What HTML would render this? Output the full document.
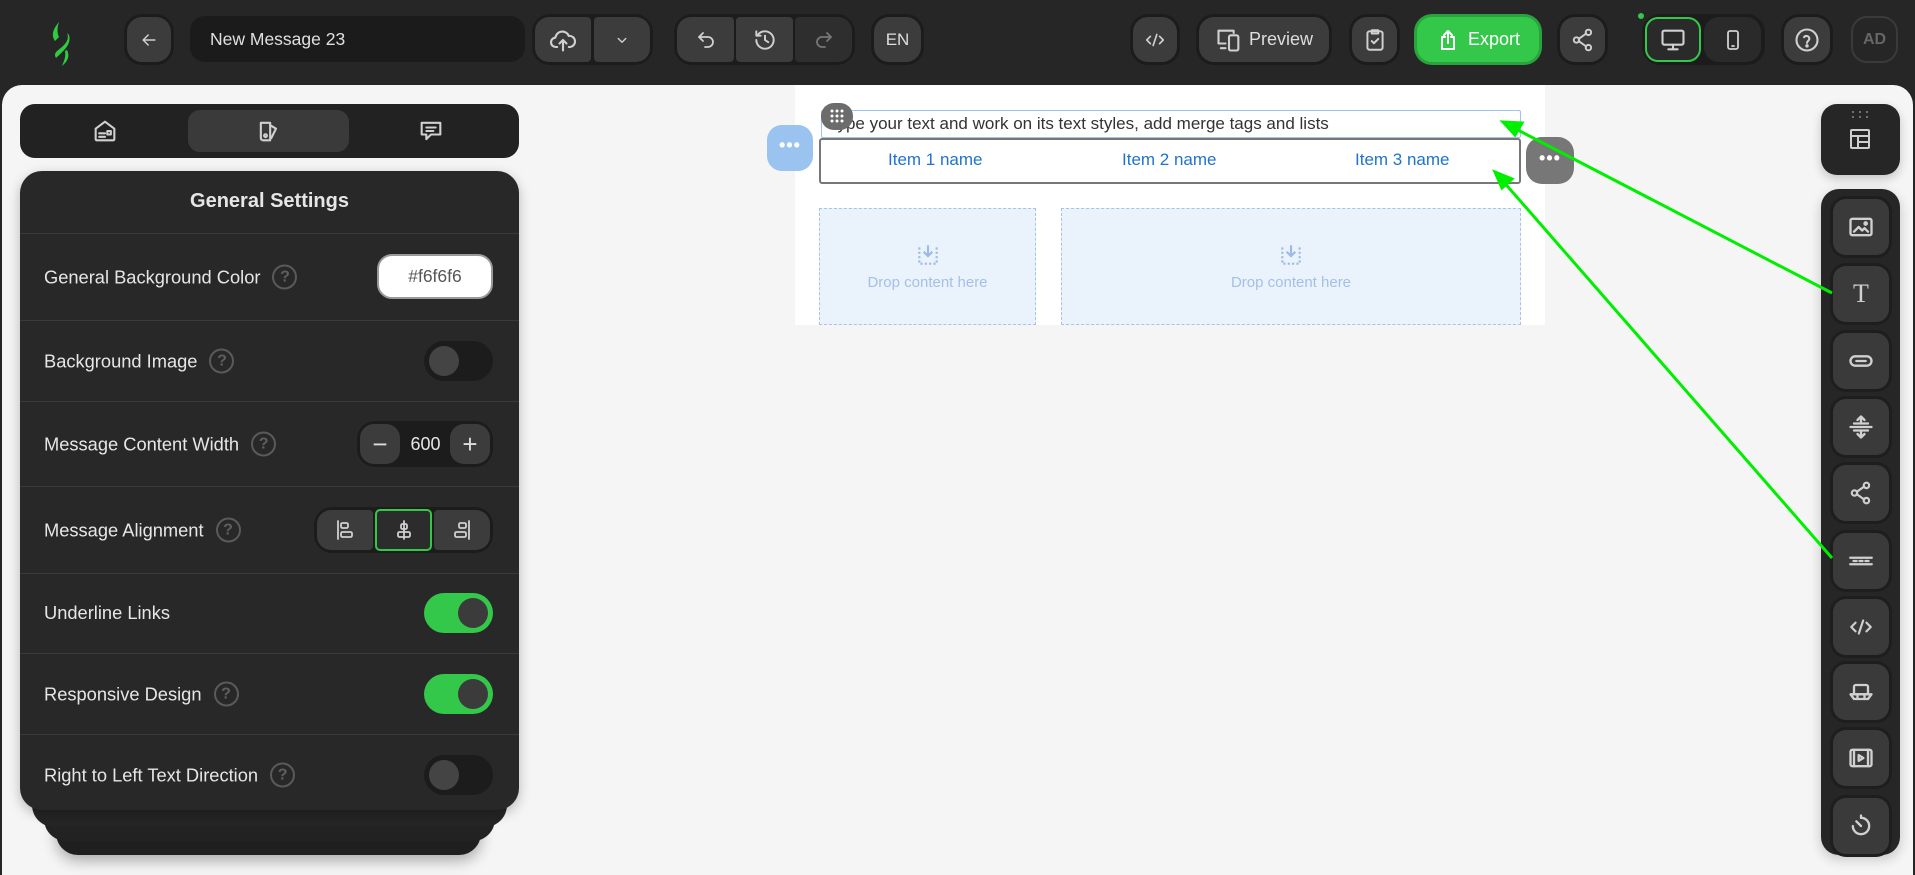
<!DOCTYPE html>
<html><head><meta charset="utf-8"><style>
*{box-sizing:border-box;margin:0;padding:0}
body{width:1915px;height:865px;overflow:hidden;background:#262626;font-family:"Liberation Sans",sans-serif;position:relative}
.a{position:absolute}
.btn{position:absolute;background:#3c3c3c;border-radius:15px;display:flex;align-items:center;justify-content:center;color:#ddd}
.grp{position:absolute;background:#1c1c1c;border-radius:18px}
svg{display:block}
.ic{fill:none;stroke:#d0d0d0;stroke-width:1.8;stroke-linecap:round;stroke-linejoin:round}
.row{position:absolute;left:20px;width:499px;border-top:1px solid #3a3a3a}
.lbl{position:absolute;left:44px;font-size:18.3px;color:#e6e6e6;transform:translateY(-50%);display:flex;align-items:center;white-space:nowrap}
.q{display:inline-block;width:25px;height:25px;border:2px solid #5a5a5a;border-radius:50%;color:#5f5f5f;font-size:16px;text-align:center;line-height:21px;margin-left:12px;font-weight:bold}
.tog{position:absolute;left:424px;width:69px;height:40px;border-radius:20px;background:#1c1c1c}
.tog i{position:absolute;top:5px;width:30px;height:30px;border-radius:50%;background:#444}
.tog.on{background:#34c84a}
.tog.on i{right:5px;background:#3b3b3b}
.tog.off i{left:5px}
.tool{position:absolute;left:1833px;width:56px;height:56px;background:#3a3a3a;border-radius:13px;box-shadow:0 0 0 3px #1e1e1e;display:flex;align-items:center;justify-content:center}
.drop{position:absolute;background:#eaf2fc;border:1px dashed #a6c3ea;display:flex;flex-direction:column;align-items:center;justify-content:center;color:#a5c0e6;font-size:15px}
</style></head><body>

<div class="a" style="left:2px;top:85px;width:1911px;height:790px;background:#f5f5f5;border-radius:20px 20px 0 0"></div>

<!-- logo -->
<svg class="a" style="left:46px;top:20px" width="30" height="48" viewBox="0 0 30 48"><path d="M13 2 C7 9 5 15 9 21 L13 17 C11 13 11 8 13 2Z" fill="#2ecc40"/><path d="M21 13 C24 20 19 25 11 31 C8 34 9 36 10 38 C16 32 26 25 23 15Z" fill="#2ecc40"/><path d="M19 31 C20 37 18 41 16 46 C22 41 24 36 21 30Z" fill="#2ecc40"/></svg>

<div class="grp" style="left:124px;top:14px;width:50px;height:51px"></div>
<div class="btn" style="left:127px;top:17px;width:44px;height:45px"><svg width="20" height="20" viewBox="0 0 24 24" class="ic"><path d="M19 12H5M11 6l-6 6 6 6"/></svg></div>
<div class="a" style="left:190px;top:16px;width:335px;height:46px;background:#1b1b1b;border-radius:15px;color:#e0e0e0;font-size:17.5px;line-height:46px;padding-left:20px">New Message 23</div>
<div class="grp" style="left:532px;top:14px;width:121px;height:51px"></div>
<div class="btn" style="left:535px;top:17px;width:56px;height:45px;border-radius:14px 4px 4px 14px"><svg width="28" height="28" viewBox="0 0 24 24" class="ic"><path d="M7 18H6a4 4 0 01-.5-8 6 6 0 0111.5-1.5A4.5 4.5 0 0118 18h-1"/><path d="M12 21v-9M9 15l3-3 3 3"/></svg></div>
<div class="btn" style="left:594px;top:17px;width:56px;height:45px;border-radius:4px 14px 14px 4px"><svg width="18" height="18" viewBox="0 0 24 24" class="ic"><path d="M7 10l5 5 5-5"/></svg></div>
<div class="grp" style="left:674px;top:14px;width:181px;height:51px"></div>
<div class="btn" style="left:677px;top:17px;width:57px;height:45px;border-radius:14px 4px 4px 14px"><svg width="24" height="24" viewBox="0 0 24 24" class="ic"><path d="M9 13L5 9l4-4"/><path d="M5 9h9a5 5 0 010 10h-3"/></svg></div>
<div class="btn" style="left:736px;top:17px;width:57px;height:45px;border-radius:4px"><svg width="26" height="26" viewBox="0 0 24 24" class="ic"><path d="M4 12a8 8 0 108-8 8 8 0 00-7 4"/><path d="M4 4v4h4"/><path d="M12 8v4l3 2"/></svg></div>
<div class="btn" style="left:795px;top:17px;width:57px;height:45px;border-radius:4px 14px 14px 4px;background:#2e2e2e"><svg width="24" height="24" viewBox="0 0 24 24" class="ic" style="stroke:#777"><path d="M15 13l4-4-4-4"/><path d="M19 9h-9a5 5 0 000 10h3"/></svg></div>
<div class="grp" style="left:871px;top:14px;width:53px;height:51px"></div>
<div class="btn" style="left:874px;top:17px;width:47px;height:45px;font-size:17px">EN</div>
<div class="grp" style="left:1130px;top:14px;width:50px;height:51px"></div>
<div class="btn" style="left:1133px;top:17px;width:44px;height:45px"><svg width="24" height="22" viewBox="0 0 24 24" class="ic"><path d="M7 8l-4 4 4 4M17 8l4 4-4 4M14 6l-4 12"/></svg></div>
<div class="grp" style="left:1196px;top:14px;width:136px;height:51px"></div>
<div class="btn" style="left:1199px;top:17px;width:130px;height:45px;font-size:18px;gap:6px"><svg width="28" height="28" viewBox="0 0 24 24" class="ic"><path d="M16 6V4H3v11h6"/><path d="M5 19h4"/><rect x="12" y="8" width="8" height="13" rx="1.5"/></svg>Preview</div>
<div class="grp" style="left:1349px;top:14px;width:51px;height:51px"></div>
<div class="btn" style="left:1352px;top:17px;width:45px;height:45px"><svg width="26" height="26" viewBox="0 0 24 24" class="ic"><rect x="5" y="4" width="14" height="17" rx="2"/><path d="M9 3h6v3H9z"/><path d="M9 13l2 2 4-4"/></svg></div>
<div class="a" style="left:1414px;top:14px;width:128px;height:51px;background:#2aa33e;border-radius:18px"></div>
<div class="btn" style="left:1417px;top:17px;width:122px;height:45px;background:#34c84a;color:#fff;font-size:18px;gap:8px"><svg width="24" height="26" viewBox="0 0 24 24" fill="none" stroke="#fff" stroke-width="2" stroke-linecap="round" stroke-linejoin="round"><path d="M9 9H6v12h12V9h-3"/><path d="M12 15V3M8 7l4-4 4 4"/></svg>Export</div>
<div class="grp" style="left:1557px;top:14px;width:51px;height:51px"></div>
<div class="btn" style="left:1560px;top:17px;width:45px;height:45px"><svg width="26" height="26" viewBox="0 0 24 24" class="ic"><circle cx="17" cy="5" r="2.5"/><circle cx="6" cy="12" r="2.5"/><circle cx="17" cy="19" r="2.5"/><path d="M8 11l7-5M8 13l7 5"/></svg></div>
<div class="a" style="left:1638px;top:13px;width:6px;height:6px;border-radius:50%;background:#34c84a"></div>
<div class="grp" style="left:1642px;top:14px;width:123px;height:51px"></div>
<div class="btn" style="left:1645px;top:17px;width:56px;height:45px;background:#2a2a2a;border:2px solid #34c84a;border-radius:13px"><svg width="28" height="28" viewBox="0 0 24 24" class="ic"><rect x="3" y="4" width="18" height="12" rx="1.5"/><path d="M12 16v4M8 20h8"/></svg></div>
<div class="btn" style="left:1704px;top:17px;width:57px;height:45px;background:#2a2a2a"><svg width="24" height="28" viewBox="0 0 24 24" class="ic"><rect x="7" y="3" width="10" height="18" rx="2"/><path d="M11 18h2"/></svg></div>
<div class="grp" style="left:1781px;top:14px;width:52px;height:51px"></div>
<div class="btn" style="left:1784px;top:17px;width:46px;height:45px"><svg width="28" height="28" viewBox="0 0 24 24" class="ic"><circle cx="12" cy="12" r="9"/><path d="M9.5 9.5a2.5 2.5 0 014.5 1.5c0 1.5-2 2-2 3.5"/><circle cx="12" cy="17" r=".6" fill="#d0d0d0"/></svg></div>
<div class="a" style="left:1851px;top:16px;width:47px;height:47px;border:2px solid #3a3a3a;border-radius:16px;color:#666;font-size:16px;font-weight:bold;text-align:center;line-height:43px">AD</div>

<!-- left tabs -->
<div class="a" style="left:20px;top:104px;width:499px;height:54px;background:#222;border-radius:15px"></div>
<div class="a" style="left:188px;top:110px;width:161px;height:42px;background:#3a3a3a;border-radius:12px"></div>
<svg class="a" style="left:91px;top:117px" width="28" height="28" viewBox="0 0 24 24"><g class="ic"><path d="M4 10l8-6 8 6v9a1 1 0 01-1 1H5a1 1 0 01-1-1z"/><path d="M7 14h5M7 17h5"/><rect x="14" y="12" width="3" height="3"/></g></svg>
<svg class="a" style="left:255px;top:117px" width="28" height="28" viewBox="0 0 24 24"><g class="ic"><path d="M5 5h8v15H7a2 2 0 01-2-2z"/><path d="M13 7l5 3-4 8"/><circle cx="9" cy="16" r="1.2"/></g></svg>
<svg class="a" style="left:417px;top:117px" width="28" height="28" viewBox="0 0 24 24"><g class="ic"><path d="M4 5h16v10h-8l-4 4v-4H4z"/><path d="M8 9h8M8 12h6"/></g></svg>

<!-- settings stack -->
<div class="a" style="left:56px;top:800px;width:425px;height:55px;background:#1f1f1f;border-radius:0 0 22px 22px;box-shadow:0 6px 14px rgba(0,0,0,.3)"></div>
<div class="a" style="left:44px;top:795px;width:451px;height:46px;background:#222;border-radius:0 0 22px 22px"></div>
<div class="a" style="left:32px;top:790px;width:475px;height:37px;background:#252525;border-radius:0 0 22px 22px"></div>
<div class="a" style="left:20px;top:171px;width:499px;height:639px;background:#282828;border-radius:22px;box-shadow:0 4px 12px rgba(0,0,0,.25)"></div>
<div class="a" style="left:20px;top:190px;width:499px;text-align:center;color:#e6e6e6;font-size:20px;font-weight:bold">General Settings</div>
<div class="row" style="top:233px"></div><div class="row" style="top:320px"></div><div class="row" style="top:401px"></div><div class="row" style="top:486px"></div><div class="row" style="top:573px"></div><div class="row" style="top:653px"></div><div class="row" style="top:734px"></div>

<div class="lbl" style="top:277px">General Background Color<span class="q">?</span></div>
<div class="a" style="left:377px;top:254px;width:116px;height:45px;background:#fff;border:2px solid #999;border-radius:15px;color:#555;font-size:17.5px;text-align:center;line-height:41px">#f6f6f6</div>

<div class="lbl" style="top:361px">Background Image<span class="q">?</span></div>
<div class="tog off" style="top:341px"><i></i></div>

<div class="lbl" style="top:444px">Message Content Width<span class="q">?</span></div>
<div class="a" style="left:357px;top:421px;width:136px;height:46px;background:#1c1c1c;border-radius:18px"></div>
<div class="btn" style="left:360px;top:424px;width:40px;height:40px;border-radius:14px;font-size:26px">−</div>
<div class="a" style="left:400px;top:421px;width:51px;height:46px;color:#e6e6e6;font-size:18px;text-align:center;line-height:46px">600</div>
<div class="btn" style="left:450px;top:424px;width:40px;height:40px;border-radius:14px;font-size:26px">+</div>

<div class="lbl" style="top:530px">Message Alignment<span class="q">?</span></div>
<div class="a" style="left:314px;top:507px;width:179px;height:46px;background:#1c1c1c;border-radius:18px"></div>
<div class="btn" style="left:317px;top:510px;width:56px;height:40px;border-radius:14px 4px 4px 14px"><svg width="24" height="24" viewBox="0 0 24 24" class="ic"><path d="M5 3v18"/><rect x="8" y="5" width="7" height="5" rx="1.5"/><rect x="8" y="14" width="11" height="5" rx="1.5"/></svg></div>
<div class="btn" style="left:375px;top:509px;width:57px;height:42px;border-radius:5px;background:#2c2c2c;border:2px solid #34c84a"><svg width="24" height="24" viewBox="0 0 24 24" class="ic"><path d="M12 3v18"/><rect x="9" y="6" width="6" height="5" rx="1.5"/><rect x="6" y="14" width="12" height="5" rx="1.5"/></svg></div>
<div class="btn" style="left:434px;top:510px;width:56px;height:40px;border-radius:4px 14px 14px 4px"><svg width="24" height="24" viewBox="0 0 24 24" class="ic"><path d="M19 3v18"/><rect x="9" y="5" width="7" height="5" rx="1.5"/><rect x="5" y="14" width="11" height="5" rx="1.5"/></svg></div>

<div class="lbl" style="top:613px">Underline Links</div>
<div class="tog on" style="top:593px"><i></i></div>

<div class="lbl" style="top:694px">Responsive Design<span class="q">?</span></div>
<div class="tog on" style="top:674px"><i></i></div>

<div class="lbl" style="top:775px">Right to Left Text Direction<span class="q">?</span></div>
<div class="tog off" style="top:755px"><i></i></div>

<!-- email canvas -->
<div class="a" style="left:795px;top:85px;width:750px;height:240px;background:#fff"></div>
<div class="a" style="left:821px;top:110px;width:700px;height:28px;border:1.5px solid #9fc2ee;border-radius:2px;font-size:17px;color:#333;line-height:25px;padding-left:6px;white-space:nowrap;overflow:hidden">Type your text and work on its text styles, add merge tags and lists</div>
<div class="a" style="left:819px;top:138px;width:702px;height:46px;border:2px solid #777;border-radius:3px"></div>
<div class="a" style="left:888px;top:150px;font-size:17px;color:#1f72d0">Item 1 name</div>
<div class="a" style="left:1122px;top:150px;font-size:17px;color:#1f72d0">Item 2 name</div>
<div class="a" style="left:1355px;top:150px;font-size:17px;color:#1f72d0">Item 3 name</div>
<div class="a" style="left:821px;top:103px;width:32px;height:27px;background:#6c6c6c;border-radius:13px"></div>
<svg class="a" style="left:828px;top:108px" width="18" height="16" viewBox="0 0 18 16" fill="#fff"><circle cx="4" cy="3" r="1.5"/><circle cx="9" cy="3" r="1.5"/><circle cx="14" cy="3" r="1.5"/><circle cx="4" cy="8" r="1.5"/><circle cx="9" cy="8" r="1.5"/><circle cx="14" cy="8" r="1.5"/><circle cx="4" cy="13" r="1.5"/><circle cx="9" cy="13" r="1.5"/><circle cx="14" cy="13" r="1.5"/></svg>
<div class="a" style="left:767px;top:125px;width:46px;height:46px;background:#9ac3f0;border-radius:15px;color:#fff;font-size:18px;text-align:center;line-height:40px;letter-spacing:1px;font-weight:bold">•••</div>
<div class="a" style="left:1526px;top:137px;width:48px;height:47px;background:#777;border-radius:16px;color:#fff;font-size:18px;text-align:center;line-height:42px;letter-spacing:1px;font-weight:bold">•••</div>

<div class="drop" style="left:819px;top:208px;width:217px;height:117px"><svg width="26" height="26" viewBox="0 0 24 24" fill="none" stroke="#9dbbe6" stroke-width="2"><path d="M4 5v15h16V5" stroke-dasharray="2 2"/><path d="M12 3v10M8 9l4 4 4-4"/></svg><div style="margin-top:6px">Drop content here</div></div>
<div class="drop" style="left:1061px;top:208px;width:460px;height:117px"><svg width="26" height="26" viewBox="0 0 24 24" fill="none" stroke="#9dbbe6" stroke-width="2"><path d="M4 5v15h16V5" stroke-dasharray="2 2"/><path d="M12 3v10M8 9l4 4 4-4"/></svg><div style="margin-top:6px">Drop content here</div></div>

<!-- right sidebar -->
<div class="a" style="left:1821px;top:104px;width:79px;height:71px;background:#262626;border-radius:16px;box-shadow:0 4px 10px rgba(0,0,0,.2)"></div>
<svg class="a" style="left:1846px;top:108px" width="28" height="52" viewBox="0 0 28 52"><g fill="#888"><circle cx="7" cy="4" r="1"/><circle cx="14" cy="4" r="1"/><circle cx="21" cy="4" r="1"/><circle cx="7" cy="9" r="1"/><circle cx="14" cy="9" r="1"/><circle cx="21" cy="9" r="1"/></g><g class="ic" style="stroke-width:2"><rect x="5" y="22" width="18" height="18" rx="1"/><path d="M5 28h18M12 28v12M12 34h11"/></g></svg>
<div class="a" style="left:1821px;top:189px;width:79px;height:666px;background:#262626;border-radius:18px;box-shadow:0 4px 12px rgba(0,0,0,.2)"></div>
<div class="tool" style="top:199px"><svg width="28" height="28" viewBox="0 0 24 24" class="ic" style="stroke-width:2"><rect x="3" y="5" width="18" height="14" rx="1.5"/><path d="M6 16l4-4 3 3 2-2 3 3"/><circle cx="16" cy="9" r="1"/></svg></div>
<div class="tool" style="top:266px;color:#d0d0d0;font-family:'Liberation Serif',serif;font-size:26px">T</div>
<div class="tool" style="top:333px"><svg width="28" height="28" viewBox="0 0 24 24" class="ic" style="stroke-width:2"><rect x="3" y="8" width="18" height="8" rx="4"/><path d="M8 12h8"/></svg></div>
<div class="tool" style="top:399px"><svg width="28" height="28" viewBox="0 0 24 24" class="ic" style="stroke-width:2"><path d="M3 12h18M12 3v6M9 6l3-3 3 3M12 21v-6M9 18l3 3 3-3"/><path d="M6 9h12M6 15h12"/></svg></div>
<div class="tool" style="top:465px"><svg width="26" height="26" viewBox="0 0 24 24" class="ic" style="stroke-width:2"><circle cx="17" cy="5" r="2.5"/><circle cx="6" cy="12" r="2.5"/><circle cx="17" cy="19" r="2.5"/><path d="M8 11l7-5M8 13l7 5"/></svg></div>
<div class="tool" style="top:533px"><svg width="30" height="26" viewBox="0 0 24 24" class="ic" style="stroke-width:2"><path d="M2 9h20M2 15h20"/><path d="M5 12h3M10.5 12h3M16 12h3"/></svg></div>
<div class="tool" style="top:599px"><svg width="26" height="26" viewBox="0 0 24 24" class="ic" style="stroke-width:2"><path d="M7 8l-4 4 4 4M17 8l4 4-4 4M14 6l-4 12"/></svg></div>
<div class="tool" style="top:664px"><svg width="28" height="28" viewBox="0 0 24 24" class="ic" style="stroke-width:2"><rect x="6" y="6" width="12" height="8" rx="1.5"/><path d="M3 14h18l-3 4H6z"/><path d="M9 14v4M15 14v4"/></svg></div>
<div class="tool" style="top:730px"><svg width="28" height="28" viewBox="0 0 24 24" class="ic" style="stroke-width:2"><rect x="3" y="5" width="18" height="14" rx="1.5"/><path d="M6 5v14M18 5v14M10 9.5v5l4-2.5z"/></svg></div>
<div class="tool" style="top:798px"><svg width="28" height="28" viewBox="0 0 24 24" class="ic" style="stroke-width:2"><path d="M12 5a7 7 0 11-7 7"/><path d="M8 8l4 4"/><path d="M12 3v2"/></svg></div>

<!-- arrows -->
<svg class="a" style="left:0;top:0" width="1915" height="865"><g stroke="#00ee00" stroke-width="3" fill="#00ee00"><line x1="1832" y1="293" x2="1512" y2="127"/><polygon points="1503,122 1522,123 1515,135"/><line x1="1832" y1="558" x2="1502" y2="180"/><polygon points="1495,172 1512,179 1502,188"/></g></svg>
</body></html>
